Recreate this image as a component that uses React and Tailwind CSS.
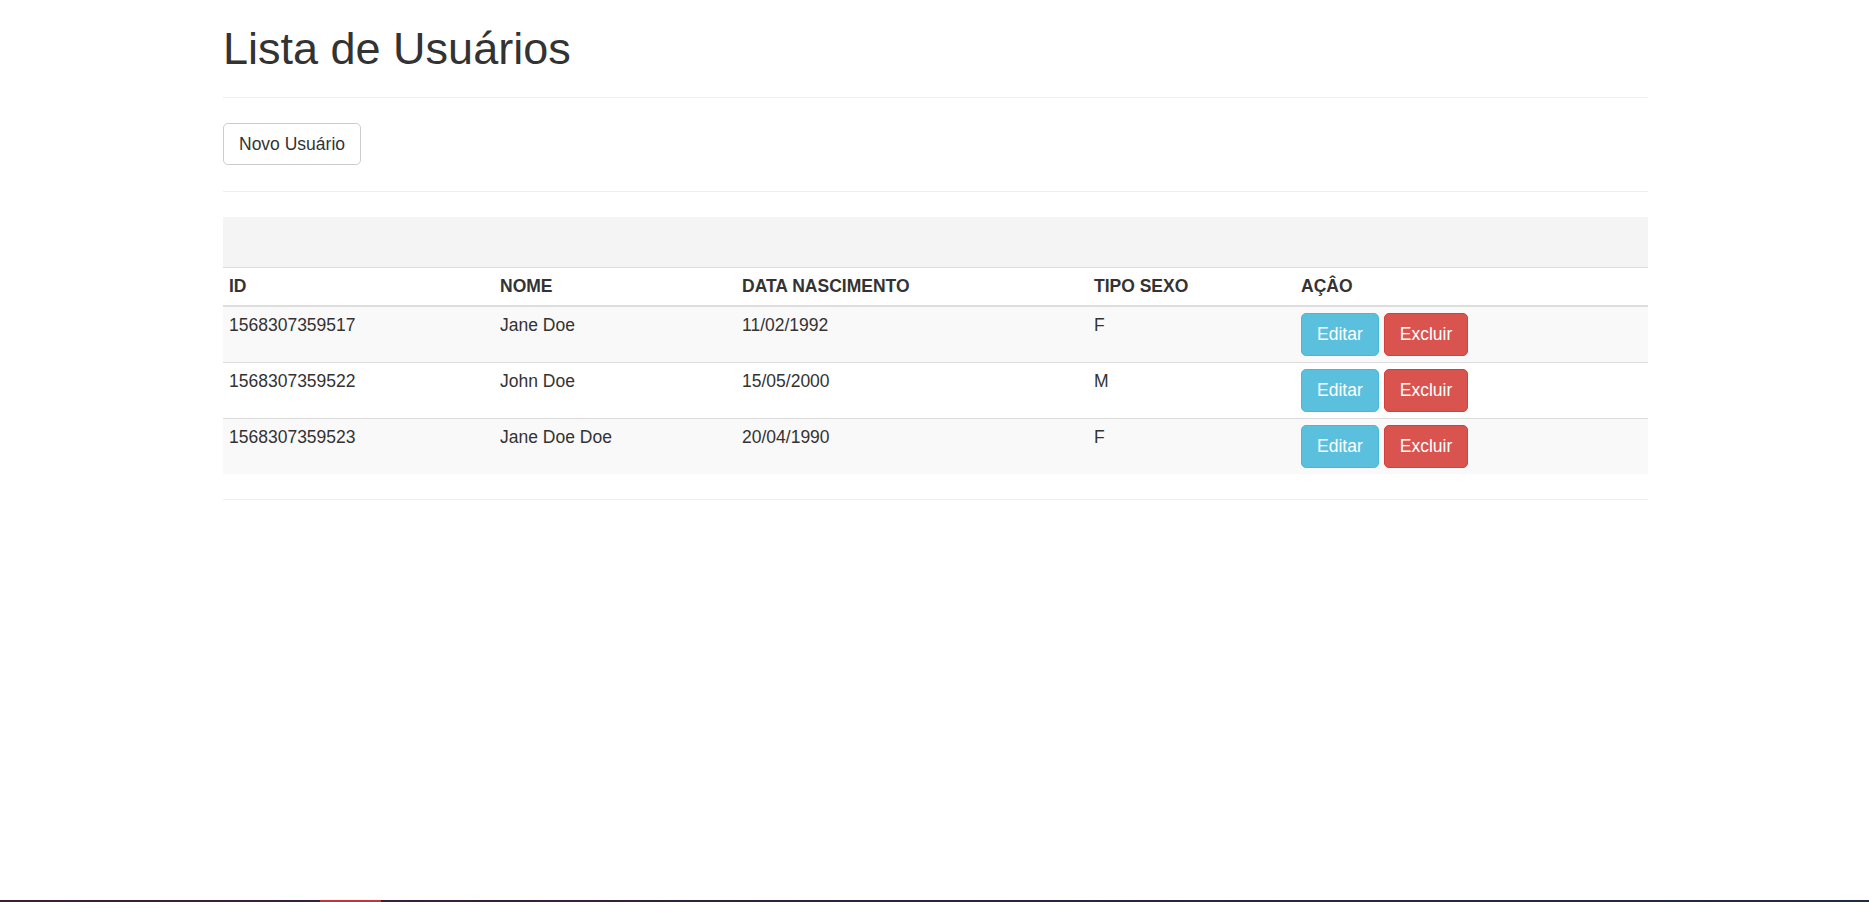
import React from "react";

const rows = [
  { id: "1568307359517", nome: "Jane Doe", data: "11/02/1992", sexo: "F" },
  { id: "1568307359522", nome: "John Doe", data: "15/05/2000", sexo: "M" },
  { id: "1568307359523", nome: "Jane Doe Doe", data: "20/04/1990", sexo: "F" },
];

export default function App() {
  return (
    <div
      className="min-h-screen flex flex-col bg-white text-[#333]"
      style={{ fontFamily: '"Liberation Sans", Arial, Helvetica, sans-serif' }}
    >
      <div className="w-[1425px] ml-[223px]">
        <h1 className="mt-[24px] text-[45px] leading-[50px] font-normal text-[#333]">
          Lista de Usuários
        </h1>
        <div className="mt-[23px] h-px bg-[#eee]" />
        <div className="mt-[25px] flex">
          <button className="h-[42px] px-[15px] border border-[#ccc] rounded-[5px] bg-white text-[17.5px] leading-[25px] text-[#333]">
            Novo Usuário
          </button>
        </div>
        <div className="mt-[26px] h-px bg-[#eee]" />
        <div className="mt-[25px] h-[50px] bg-[#f4f4f4]" />
        <table className="w-full table-fixed border-collapse text-[17.5px] leading-[25px]">
          <colgroup>
            <col className="w-[271px]" />
            <col className="w-[242px]" />
            <col className="w-[352px]" />
            <col className="w-[207px]" />
            <col />
          </colgroup>
          <thead>
            <tr>
              {["ID", "NOME", "DATA NASCIMENTO", "TIPO SEXO", "AÇÂO"].map((h) => (
                <th
                  key={h}
                  className="text-left align-bottom font-bold px-[6px] py-[6px] border-t border-t-[#ddd] border-b-2 border-b-[#ddd]"
                >
                  {h}
                </th>
              ))}
            </tr>
          </thead>
          <tbody>
            {rows.map((r, i) => (
              <tr key={r.id} className={i % 2 === 0 ? "bg-[#f9f9f9]" : "bg-white"}>
                <td className="align-top px-[6px] py-[6px] border-t border-t-[#ddd]">{r.id}</td>
                <td className="align-top px-[6px] py-[6px] border-t border-t-[#ddd]">{r.nome}</td>
                <td className="align-top px-[6px] py-[6px] border-t border-t-[#ddd]">{r.data}</td>
                <td className="align-top px-[6px] py-[6px] border-t border-t-[#ddd]">{r.sexo}</td>
                <td className="align-top px-[6px] py-[6px] border-t border-t-[#ddd]">
                  <div className="flex gap-[5px]">
                    <button className="h-[43px] px-[15px] rounded-[5px] border border-[#46b8da] bg-[#5bc0de] text-white text-[17.5px] leading-[25px]">
                      Editar
                    </button>
                    <button className="h-[43px] px-[15px] rounded-[5px] border border-[#d43f3a] bg-[#d9534f] text-white text-[17.5px] leading-[25px]">
                      Excluir
                    </button>
                  </div>
                </td>
              </tr>
            ))}
          </tbody>
        </table>
        <div className="mt-[25px] h-px bg-[#eee]" />
      </div>
      <div className="mt-auto h-[2px] w-full bg-linear-to-r from-[#3e1d38] via-[#2f2142] to-[#1e2a48] flex">
        <div className="ml-[320px] w-[61px] h-full bg-[#c8323c]" />
      </div>
    </div>
  );
}
